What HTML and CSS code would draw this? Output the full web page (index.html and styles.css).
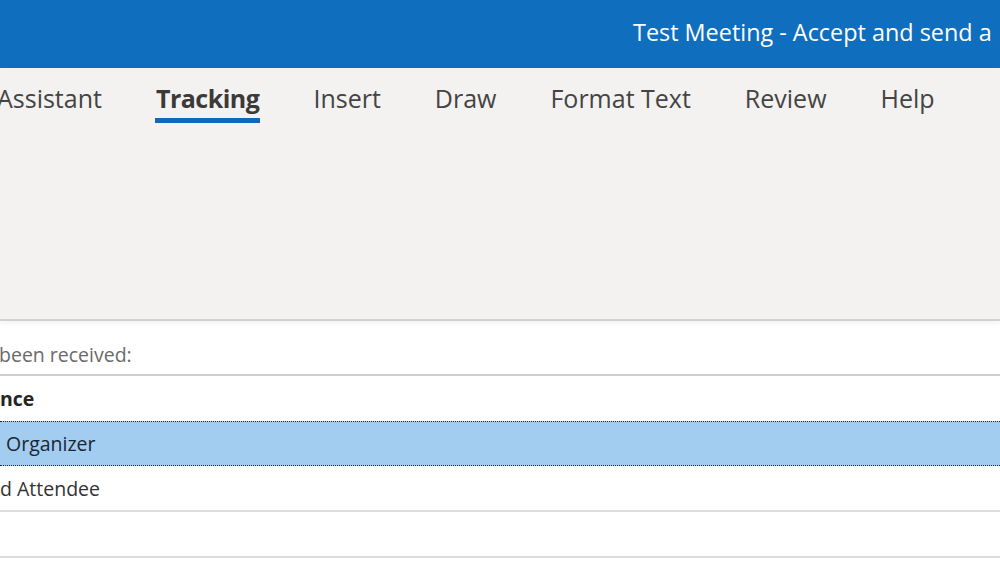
FILE: index.html
```html
<!DOCTYPE html>
<html>
<head>
<meta charset="utf-8">
<link rel="stylesheet" href="styles.css">
</head>
<body>
<div class="window">
  <header class="titlebar">
    <span class="title">Test Meeting - Accept and send a</span>
  </header>
  <nav class="ribbon">
    <ul class="tabs">
      <li class="tab tab-assistant">Assistant</li>
      <li class="tab tab-active">Tracking</li>
      <li class="tab">Insert</li>
      <li class="tab">Draw</li>
      <li class="tab">Format Text</li>
      <li class="tab">Review</li>
      <li class="tab">Help</li>
    </ul>
  </nav>
  <main class="content">
    <p class="note">been received:</p>
    <div class="table">
      <div class="row head"><span class="cell">nce</span></div>
      <div class="row selected"><span class="cell">Organizer</span></div>
      <div class="row"><span class="cell">d Attendee</span></div>
      <div class="row empty"><span class="cell"></span></div>
    </div>
  </main>
</div>
</body>
</html>
```
FILE: styles.css
```css
html, body {
  margin: 0;
  padding: 0;
  width: 1000px;
  height: 568px;
  overflow: hidden;
  background: #ffffff;
  font-family: "Open Sans", "Noto Sans", "Liberation Sans", sans-serif;
}

.window {
  display: flex;
  flex-direction: column;
  width: 1000px;
  height: 568px;
}

.titlebar {
  height: 68px;
  background: #106ebe;
  display: flex;
  align-items: center;
  padding-left: 633px;
  padding-bottom: 4px;
  box-sizing: border-box;
  white-space: nowrap;
  overflow: hidden;
}

.title {
  color: #ffffff;
  font-size: 23.4px;
}

.ribbon {
  height: 253px;
  background: #f3f2f1;
  border-bottom: 2px solid #d3d1cf;
  box-sizing: border-box;
  box-shadow: 0 2px 6px rgba(0,0,0,0.06);
  position: relative;
  z-index: 1;
}

.tabs {
  list-style: none;
  margin: 0;
  padding: 0;
  display: flex;
  gap: 54px;
  margin-left: -3px;
  height: 62px;
  align-items: flex-start;
}

.tab {
  font-size: 25px;
  color: #444444;
  padding-top: 13px;
  height: 49px;
  white-space: nowrap;
  position: relative;
}

.tab-active {
  font-weight: 700;
  color: #3b3a39;
  letter-spacing: -0.5px;
}

.tab-active::after {
  content: "";
  position: absolute;
  left: -1px;
  right: -1px;
  top: 50px;
  height: 5px;
  background: #1366b8;
}

.content {
  flex: 1;
  background: #ffffff;
  padding-top: 19px;
}

.note {
  margin: 0 0 0 -1px;
  font-size: 19.5px;
  color: #6a6a6a;
  height: 34px;
  line-height: 30px;
  border-bottom: 2px solid #cfcfcf;
}

.table {
  display: flex;
  flex-direction: column;
}

.row {
  height: 44px;
  display: flex;
  align-items: center;
  border-bottom: 2px solid #dcdcdc;
  font-size: 19.5px;
  color: #333333;
  white-space: nowrap;
}

.row.head {
  border-bottom: none;
  font-weight: 700;
  color: #252423;
  height: 45px;
}

.row.selected {
  background: #a3cdf0;
  border-top: 1px dotted #1b2b3d;
  border-bottom: 1px dotted #1b2b3d;
  height: 43px;
  color: #1b2635;
  padding-left: 6px;
}

.cell {
  display: block;
}
```
